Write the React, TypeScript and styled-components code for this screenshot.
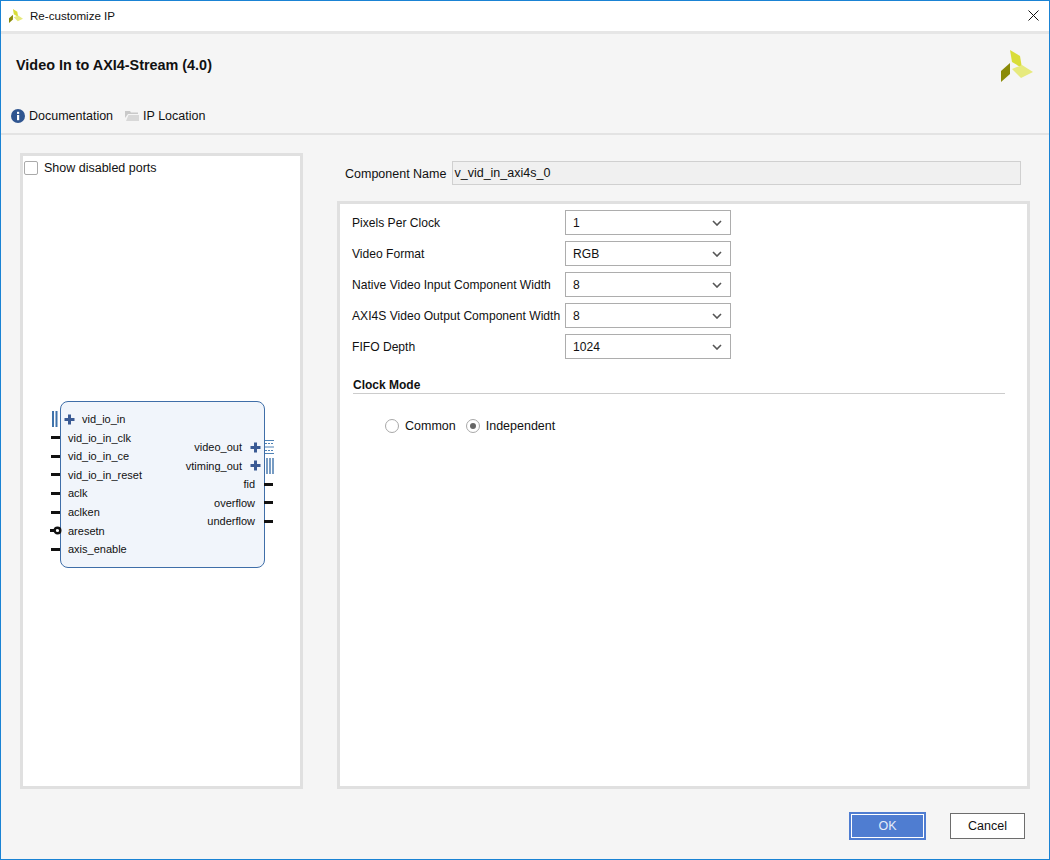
import React from 'react'
import styled, { createGlobalStyle } from 'styled-components'

const GlobalStyle = createGlobalStyle`
  html, body {
    margin: 0;
    padding: 0;
    background: #f5f5f5;
    font-family: "Liberation Sans", Arial, sans-serif;
    font-size: 12.5px;
    color: #111;
  }
  * { box-sizing: border-box; }
`

type Port = { name: string; pin?: 'wire' | 'inverted' | 'bus' | 'stream'; plus?: boolean }

const leftPorts: Port[] = [
  { name: 'vid_io_in', pin: 'bus', plus: true },
  { name: 'vid_io_in_clk' },
  { name: 'vid_io_in_ce' },
  { name: 'vid_io_in_reset' },
  { name: 'aclk' },
  { name: 'aclken' },
  { name: 'aresetn', pin: 'inverted' },
  { name: 'axis_enable' },
]

const rightPorts: Port[] = [
  { name: 'video_out', pin: 'stream', plus: true },
  { name: 'vtiming_out', pin: 'bus', plus: true },
  { name: 'fid' },
  { name: 'overflow' },
  { name: 'underflow' },
]

const options = [
  { label: 'Pixels Per Clock', value: '1' },
  { label: 'Video Format', value: 'RGB' },
  { label: 'Native Video Input Component Width', value: '8' },
  { label: 'AXI4S Video Output Component Width', value: '8' },
  { label: 'FIFO Depth', value: '1024' },
]

const Logo = ({ size }: { size: number }) => (
  <svg width={size} height={size} viewBox="0 0 32 32">
    <path d="M9 0 L19 6 L21 18 L11 12 Z" fill="#d9dd38" />
    <path d="M11 19 L21 15 L32 22 L20 28 Z" fill="#e7ea7e" />
    <path d="M0 21 L9 13 L9 24 L0 32 Z" fill="#8a8a08" />
  </svg>
)

const PlusIcon = () => (
  <svg width="11" height="11" viewBox="0 0 11 11">
    <path d="M5.5 0.5 V10.5 M0.5 5.5 H10.5" stroke="#3a5a94" strokeWidth="3" />
  </svg>
)

const Pin = ({ port, side }: { port: Port; side: 'left' | 'right' }) => {
  const kind = port.pin ?? 'wire'
  if (kind === 'wire') {
    return <WirePin $side={side} />
  }
  if (kind === 'inverted') {
    return (
      <InvertedPin>
        <svg width="12" height="9" viewBox="0 0 12 9">
          <path d="M0 4.5 H4" stroke="#111" strokeWidth="3" />
          <circle cx="7.5" cy="4.5" r="2.8" fill="#fff" stroke="#111" strokeWidth="2.4" />
        </svg>
      </InvertedPin>
    )
  }
  if (kind === 'bus') {
    return (
      <BusPin $side={side}>
        {side === 'left' ? (
          <svg width="6" height="16" viewBox="0 0 6 16">
            <path d="M1 0 V16 M4.5 0 V16" stroke="#3f73ab" strokeWidth="2" />
          </svg>
        ) : (
          <svg width="9" height="16" viewBox="0 0 9 16">
            <path d="M2 0 V16 M5 0 V16 M8 0 V16" stroke="#3f73ab" strokeWidth="1.4" />
          </svg>
        )}
      </BusPin>
    )
  }
  return (
    <BusPin $side={side}>
      <svg width="9" height="16" viewBox="0 0 9 16">
        <path d="M0 1.5 H9 M0 8 H9 M0 14.5 H9" stroke="#4f82b5" strokeWidth="1.2" />
        <path d="M0 4.5 H9 M0 11.5 H9" stroke="#4f82b5" strokeWidth="1.2" strokeDasharray="2 1" />
      </svg>
    </BusPin>
  )
}

export default function App() {
  return (
    <Window>
      <GlobalStyle />
      <TitleBar>
        <TitleLeft>
          <Logo size={14} />
          <span>Re-customize IP</span>
        </TitleLeft>
        <CloseButton aria-label="Close">
          <svg width="11" height="11" viewBox="0 0 11 11">
            <path d="M0.5 0.5 L10.5 10.5 M10.5 0.5 L0.5 10.5" stroke="#111" strokeWidth="1" />
          </svg>
        </CloseButton>
      </TitleBar>

      <Header>
        <Heading>Video In to AXI4-Stream (4.0)</Heading>
        <Logo size={32} />
      </Header>

      <Toolbar>
        <ToolLink>
          <svg width="14" height="14" viewBox="0 0 14 14">
            <circle cx="7" cy="7" r="7" fill="#2f5590" />
            <rect x="6" y="6" width="2.2" height="5.2" fill="#fff" />
            <rect x="6" y="2.8" width="2.2" height="2.1" fill="#fff" />
          </svg>
          Documentation
        </ToolLink>
        <ToolLink>
          <svg width="14" height="12" viewBox="0 0 14 12">
            <path d="M0 1 H5 L6 2.5 H13 V4 H3 L0 8 Z" fill="#c9c9c9" />
            <path d="M1 11 L3.5 5 H14 V11 Z" fill="#d8d8d8" />
          </svg>
          IP Location
        </ToolLink>
      </Toolbar>

      <Body>
        <SymbolPanel>
          <CheckRow>
            <CheckBox />
            Show disabled ports
          </CheckRow>
          <SymbolCanvas>
            <Block>
              <PortColumn>
                {leftPorts.map((port) => (
                  <PortRow key={port.name} $indent={port.plus}>
                    <Pin port={port} side="left" />
                    {port.plus && <PlusIcon />}
                    {port.name}
                  </PortRow>
                ))}
              </PortColumn>
              <PortColumnRight>
                {rightPorts.map((port) => (
                  <PortRowRight key={port.name} $plus={port.plus}>
                    {port.name}
                    {port.plus && <PlusIcon />}
                    <Pin port={port} side="right" />
                  </PortRowRight>
                ))}
              </PortColumnRight>
            </Block>
          </SymbolCanvas>
        </SymbolPanel>

        <ConfigColumn>
          <NameRow>
            <NameLabel>Component Name</NameLabel>
            <NameInput>v_vid_in_axi4s_0</NameInput>
          </NameRow>
          <OptionsPanel>
            <OptionList>
              {options.map((option) => (
                <OptionRow key={option.label}>
                  <OptionLabel>{option.label}</OptionLabel>
                  <SelectBox>
                    {option.value}
                    <svg width="10" height="6" viewBox="0 0 10 6">
                      <path d="M1 1 L5 5 L9 1" fill="none" stroke="#555" strokeWidth="1.6" />
                    </svg>
                  </SelectBox>
                </OptionRow>
              ))}
            </OptionList>
            <SectionTitle>Clock Mode</SectionTitle>
            <RadioGroup>
              <RadioLabel>
                <Radio />
                Common
              </RadioLabel>
              <RadioLabel>
                <Radio $checked />
                Independent
              </RadioLabel>
            </RadioGroup>
          </OptionsPanel>
        </ConfigColumn>
      </Body>

      <Footer>
        <OkButton>OK</OkButton>
        <CancelButton>Cancel</CancelButton>
      </Footer>
    </Window>
  )
}

const Window = styled.div`
  width: 1050px;
  height: 860px;
  display: flex;
  flex-direction: column;
  background: #f5f5f5;
  border: 1px solid #1a83d4;
  overflow: hidden;
`
const TitleBar = styled.div`
  height: 33px;
  flex: none;
  display: flex;
  align-items: center;
  justify-content: space-between;
  background: #fff;
  border-bottom: 3px solid #e6e6e6;
  padding: 0 10px 1px 8px;
`
const TitleLeft = styled.div`
  display: flex;
  align-items: center;
  gap: 7px;
  font-size: 11.6px;
`
const CloseButton = styled.div`
  display: flex;
`
const Header = styled.div`
  height: 64px;
  flex: none;
  display: flex;
  align-items: center;
  justify-content: space-between;
  padding: 0 16px 0 15px;
`
const Heading = styled.h1`
  margin: 0 0 3px;
  font-size: 14.4px;
  font-weight: 700;
`
const Toolbar = styled.div`
  height: 37px;
  flex: none;
  display: flex;
  align-items: center;
  gap: 12px;
  padding: 1px 10px 0;
  border-bottom: 2px solid #e3e3e3;
`
const ToolLink = styled.div`
  display: flex;
  align-items: center;
  gap: 4px;
`
const Body = styled.div`
  flex: 1;
  min-height: 0;
  display: flex;
  gap: 34px;
  padding: 18px 19px 0;
`
const SymbolPanel = styled.div`
  width: 283px;
  height: 636px;
  flex: none;
  display: flex;
  flex-direction: column;
  background: #fff;
  border: 3px solid #e0e0e0;
`
const CheckRow = styled.label`
  display: flex;
  align-items: center;
  gap: 6px;
  padding: 5px 0 0 1px;
`
const CheckBox = styled.span`
  width: 14px;
  height: 14px;
  border: 1px solid #aaa;
  border-radius: 2px;
  background: #fff;
`
const SymbolCanvas = styled.div`
  flex: 1;
  padding: 226px 0 0 37px;
`
const Block = styled.div`
  width: 205px;
  height: 167px;
  display: flex;
  justify-content: space-between;
  position: relative;
  border: 1px solid #3f6ea8;
  border-radius: 8px;
  background: #f1f5fb;
  font-size: 11px;
`
const PortColumn = styled.div`
  display: flex;
  flex-direction: column;
  padding: 8px 0 0 7px;
`
const PortColumnRight = styled.div`
  display: flex;
  flex-direction: column;
  align-items: flex-end;
  padding: 36px 9px 0 0;
`
const PortRow = styled.div<{ $indent?: boolean }>`
  height: 18.55px;
  display: flex;
  align-items: center;
  gap: 7px;
  position: relative;
  margin-left: ${(p) => (p.$indent ? '-4px' : '0')};
`
const PortRowRight = styled.div<{ $plus?: boolean }>`
  height: 18.5px;
  display: flex;
  align-items: center;
  gap: 8px;
  position: relative;
  margin-right: ${(p) => (p.$plus ? '-6px' : '0')};
`
const WirePin = styled.span<{ $side: 'left' | 'right' }>`
  position: absolute;
  top: 50%;
  margin-top: -1.5px;
  width: 9px;
  height: 3px;
  background: #111;
  ${(p) => (p.$side === 'left' ? 'left: -17px;' : 'right: -18px;')}
`
const InvertedPin = styled.span`
  position: absolute;
  left: -18px;
  top: 50%;
  margin-top: -4.5px;
  display: flex;
`
const BusPin = styled.span<{ $side: 'left' | 'right' }>`
  position: absolute;
  top: 50%;
  margin-top: -8px;
  display: flex;
  ${(p) => (p.$side === 'left' ? 'left: -12px;' : 'right: -13px;')}
`
const ConfigColumn = styled.div`
  width: 693px;
  flex: none;
  display: flex;
  flex-direction: column;
`
const NameRow = styled.div`
  display: flex;
  align-items: center;
  gap: 6px;
  padding: 8px 9px 0 8px;
  height: 32px;
  flex: none;
`
const NameLabel = styled.span`
  white-space: nowrap;
  padding-top: 1px;
`
const NameInput = styled.div`
  flex: 1;
  height: 24px;
  display: flex;
  align-items: center;
  padding-left: 1px;
  background: #f0f0f0;
  border: 1px solid #d0d0d0;
`
const OptionsPanel = styled.div`
  margin-top: 16px;
  height: 588px;
  flex: none;
  background: #fff;
  border: 3px solid #e0e0e0;
  padding: 6px 22px 0 12px;
  font-size: 12.1px;
`
const OptionList = styled.div`
  display: flex;
  flex-direction: column;
  gap: 6px;
`
const OptionRow = styled.div`
  display: flex;
  align-items: center;
  height: 25px;
`
const OptionLabel = styled.span`
  width: 213px;
  flex: none;
  white-space: nowrap;
`
const SelectBox = styled.div`
  width: 166px;
  height: 25px;
  display: flex;
  align-items: center;
  justify-content: space-between;
  padding: 0 8px 0 7px;
  background: #fff;
  border: 1px solid #adadad;
`
const SectionTitle = styled.div`
  margin: 19px 0 0 1px;
  height: 16px;
  font-size: 12px;
  font-weight: 700;
  border-bottom: 1px solid #ccc;
`
const RadioGroup = styled.div`
  display: flex;
  gap: 10px;
  padding: 25px 0 0 33px;
  font-size: 12.5px;
`
const RadioLabel = styled.label`
  display: flex;
  align-items: center;
  gap: 6px;
`
const Radio = styled.span<{ $checked?: boolean }>`
  width: 14px;
  height: 14px;
  display: flex;
  align-items: center;
  justify-content: center;
  border: 1px solid #a8a8a8;
  border-radius: 50%;
  background: #fff;
  &::after {
    content: '';
    width: 6px;
    height: 6px;
    border-radius: 50%;
    background: ${(p) => (p.$checked ? '#666' : 'transparent')};
  }
`
const Footer = styled.div`
  height: 47px;
  flex: none;
  display: flex;
  justify-content: flex-end;
  align-items: flex-start;
  gap: 24px;
  padding: 0 24px 0 0;
`
const OkButton = styled.button`
  width: 77px;
  height: 28px;
  font: inherit;
  color: #e6ecf8;
  background: #4f7dd1;
  border: 2px solid #4f7dd1;
  outline: 1px solid #fff;
  outline-offset: -3px;
`
const CancelButton = styled.button`
  width: 75px;
  height: 26px;
  margin-top: 1px;
  font: inherit;
  color: #111;
  background: #fff;
  border: 1px solid #6d6d6d;
`
